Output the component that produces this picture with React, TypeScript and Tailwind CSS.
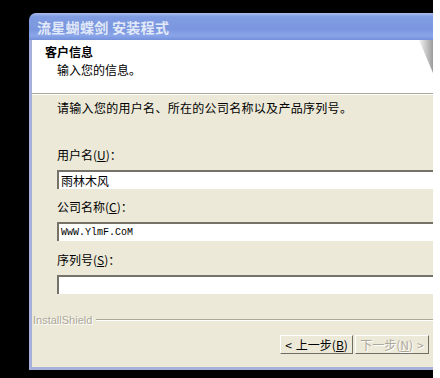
import React from 'react'

const cjk = "font-['Noto_Sans_CJK_SC','Noto_Sans',sans-serif]"

function Field({ label, hot, value, mono }: { label: string; hot: string; value?: string; mono?: boolean }) {
  return (
    <>
      <div className="ml-[25px] h-[16px] leading-[16px] text-[12px] text-black whitespace-nowrap">
        {label}(<span className="underline">{hot}</span>)：
      </div>
      <div className="mt-[7px] ml-[25px] h-[19px] bg-white border-t-2 border-l-2 border-t-[#75726a] border-l-[#75726a] flex items-center pl-[2px]">
        {value && (
          <span
            className={
              mono
                ? "font-['Liberation_Mono',monospace] text-[10px] text-black leading-[14px]"
                : 'text-[12px] text-black leading-[14px]'
            }
          >
            {value}
          </span>
        )}
      </div>
    </>
  )
}

export default function App() {
  return (
    <div className={`w-[440px] h-[378px] flex bg-white overflow-hidden ${cjk}`}>
      <div className="w-[433px] h-full bg-black pt-[13px] pl-[29px] pb-[8px] flex flex-col">
        <div className="flex-1 flex flex-col rounded-tl-[7px] overflow-hidden">
          {/* title bar */}
          <div className="h-[27px] flex items-center pl-[8px] bg-[linear-gradient(to_bottom,#a9bcee_0%,#809ce2_14%,#7a96de_60%,#8aa5e8_84%,#7390da_100%)]">
            <span className="text-[14px] font-bold text-[#e2e9f9] tracking-[0.3px] leading-none">
              流星蝴蝶剑 安装程式
            </span>
          </div>

          <div className="flex-1 flex flex-col border-l-[3px] border-b-[3px] border-[#a7b0da]">
            {/* header */}
            <div className="h-[53px] bg-white relative pt-[4px]">
              <div className="pl-[13px] text-[12px] font-bold leading-[16px] text-black">客户信息</div>
              <div className="pl-[25px] mt-[2px] text-[12px] leading-[16px] text-black">输入您的信息。</div>
              <svg className="absolute right-0 top-0" width="14" height="33" viewBox="0 0 14 33">
                <defs>
                  <linearGradient id="curl" x1="0" y1="0" x2="1" y2="0">
                    <stop offset="0" stopColor="#f4f4f4" />
                    <stop offset="1" stopColor="#9c9c9c" />
                  </linearGradient>
                </defs>
                <polygon points="0,0 14,0 14,33" fill="url(#curl)" />
              </svg>
            </div>
            <div className="h-px bg-[#aca899]" />
            <div className="h-px bg-white" />

            {/* body */}
            <div className="flex-1 bg-[#ece9d8] flex flex-col">
              <div className="mt-[5px] ml-[25px] h-[16px] leading-[16px] text-[12px] text-black whitespace-nowrap tracking-[0.3px]">
                请输入您的用户名、所在的公司名称以及产品序列号。
              </div>
              <div className="mt-[31px]" />
              <Field label="用户名" hot="U" value="雨林木风" />
              <div className="mt-[10px]" />
              <Field label="公司名称" hot="C" value="WwW.YlmF.CoM" mono />
              <div className="mt-[11px]" />
              <Field label="序列号" hot="S" />

              <div className="mt-[18px] h-[16px] flex items-center pl-[1px]">
                <span className="font-['Liberation_Sans',sans-serif] text-[11px] text-[#aca899] [text-shadow:1px_1px_0_#ffffff] leading-none">
                  InstallShield
                </span>
                <div className="flex-1 ml-[4px] flex flex-col">
                  <div className="h-px bg-[#aca899]" />
                  <div className="h-px bg-white" />
                </div>
              </div>

              <div className="mt-[7px] h-[19px] flex justify-end pr-[4px] gap-[2px]">
                <div className="w-[73px] h-[19px] bg-[#ece9d8] border border-t-white border-l-white border-r-[#716f64] border-b-[#716f64] flex items-center justify-center gap-[4px] text-[12px] text-black leading-none whitespace-nowrap">
                  <span>&lt;</span>
                  <span>上一步(<span className="underline">B</span>)</span>
                </div>
                <div className="w-[74px] h-[19px] bg-[#ece9d8] border border-t-white border-l-white border-r-[#716f64] border-b-[#716f64] flex items-center justify-center gap-[4px] text-[12px] text-[#aca899] [text-shadow:1px_1px_0_#ffffff] leading-none whitespace-nowrap">
                  <span>下一步(<span className="underline">N</span>)</span>
                  <span>&gt;</span>
                </div>
              </div>
            </div>
          </div>
        </div>
      </div>
      <div className="flex-1 bg-white" />
    </div>
  )
}
